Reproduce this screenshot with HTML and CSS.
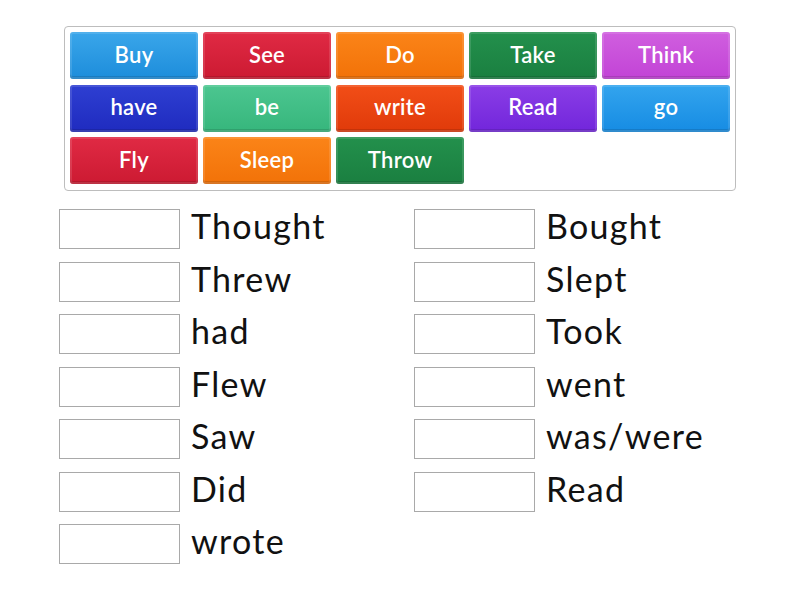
FILE: index.html
```html
<!DOCTYPE html>
<html>
<head>
<meta charset="utf-8">
<link rel="stylesheet" href="styles.css">
</head>
<body>
<div class="page">
  <div class="bank">
    <div class="tile blue">Buy</div>
    <div class="tile red">See</div>
    <div class="tile orange">Do</div>
    <div class="tile green">Take</div>
    <div class="tile pink">Think</div>
    <div class="tile navy">have</div>
    <div class="tile mint">be</div>
    <div class="tile vermilion">write</div>
    <div class="tile purple">Read</div>
    <div class="tile sky">go</div>
    <div class="tile red">Fly</div>
    <div class="tile orange">Sleep</div>
    <div class="tile green">Throw</div>
  </div>
  <div class="answers">
    <div class="col">
      <div class="row"><div class="slot"></div><span class="word">Thought</span></div>
      <div class="row"><div class="slot"></div><span class="word">Threw</span></div>
      <div class="row"><div class="slot"></div><span class="word">had</span></div>
      <div class="row"><div class="slot"></div><span class="word">Flew</span></div>
      <div class="row"><div class="slot"></div><span class="word">Saw</span></div>
      <div class="row"><div class="slot"></div><span class="word">Did</span></div>
      <div class="row"><div class="slot"></div><span class="word">wrote</span></div>
    </div>
    <div class="col">
      <div class="row"><div class="slot"></div><span class="word">Bought</span></div>
      <div class="row"><div class="slot"></div><span class="word">Slept</span></div>
      <div class="row"><div class="slot"></div><span class="word">Took</span></div>
      <div class="row"><div class="slot"></div><span class="word">went</span></div>
      <div class="row"><div class="slot"></div><span class="word">was/were</span></div>
      <div class="row"><div class="slot"></div><span class="word">Read</span></div>
    </div>
  </div>
</div>
</body>
</html>
```

FILE: styles.css
```css
html, body {
  margin: 0;
  padding: 0;
  background: #fff;
}
body {
  font-family: Lato, "Open Sans", sans-serif;
  width: 800px;
  height: 600px;
  overflow: hidden;
}
.page {
  padding-top: 26px;
}
.bank {
  margin-left: 64px;
  width: 660px;
  height: 153px;
  border: 1px solid #bdbdbd;
  border-radius: 4px;
  padding: 5px 5px 5px 5px;
  display: grid;
  grid-template-columns: repeat(5, 128px);
  grid-auto-rows: 47px;
  column-gap: 5px;
  row-gap: 5.5px;
}
.tile {
  border-radius: 3px;
  color: #fff;
  font-weight: 600;
  font-size: 22px;
  letter-spacing: 0.3px;
  display: flex;
  align-items: center;
  justify-content: center;
  padding-bottom: 3px;
  box-sizing: border-box;
  box-shadow: inset 0 0 0 2px rgba(255,255,255,0.12), inset 0 -3px 0 rgba(0,0,0,0.12);
}
.blue { background: linear-gradient(#3aa6ea, #1d8ddb); }
.red { background: linear-gradient(#e02a44, #cc1a32); }
.orange { background: linear-gradient(#fb8418, #f27208); }
.green { background: linear-gradient(#23904c, #1a7f40); }
.pink { background: linear-gradient(#d05fdf, #c243d6); }
.navy { background: linear-gradient(#2e3fd2, #1f2bbf); }
.mint { background: linear-gradient(#4cc690, #36b67c); }
.vermilion { background: linear-gradient(#f24e17, #e03a0a); }
.purple { background: linear-gradient(#8a3de6, #7226db); }
.sky { background: linear-gradient(#33a4ee, #168ce3); }

.answers {
  display: flex;
  margin-top: 18px;
  margin-left: 59px;
  column-gap: 234px;
}
.col {
  display: flex;
  flex-direction: column;
  row-gap: 12.5px;
}
.row {
  display: flex;
  align-items: center;
  height: 40px;
  width: 121px;
  white-space: nowrap;
}
.slot {
  width: 121px;
  height: 40px;
  box-sizing: border-box;
  border: 1px solid #a9a9a9;
  flex: none;
}
.word {
  margin-left: 11px;
  font-size: 34px;
  letter-spacing: 1.3px;
  color: #111;
  line-height: 40px;
  position: relative;
  top: -3px;
}
```
